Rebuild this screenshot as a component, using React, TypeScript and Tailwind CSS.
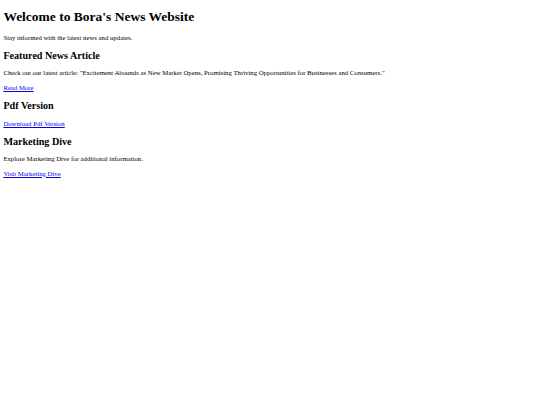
export default function App() {
  return (
    <div className="bg-white text-black m-[3.375px] font-['Liberation_Serif',serif]">
      <h1 className="text-[13.5px] leading-[15.61px] font-bold my-[9.045px]">Welcome to Bora's News Website</h1>
      <p className="text-[6.75px] leading-[7.594px] my-[6.75px]">Stay informed with the latest news and updates.</p>
      <h2 className="text-[10.125px] leading-[11.39px] font-bold my-[8.404px]">Featured News Article</h2>
      <p className="text-[6.75px] leading-[7.594px] my-[6.75px]">
        Check out our latest article: "Excitement Abounds as New Market Opens, Promising Thriving Opportunities for Businesses and Consumers."
      </p>
      <p className="text-[6.75px] leading-[7.594px] my-[6.75px]">
        <a href="#" className="text-[#0000ee] underline">Read More</a>
      </p>
      <h2 className="text-[10.125px] leading-[11.39px] font-bold my-[8.404px]">Pdf Version</h2>
      <p className="text-[6.75px] leading-[7.594px] my-[6.75px]">
        <a href="#" className="text-[#0000ee] underline">Download Pdf Version</a>
      </p>
      <h2 className="text-[10.125px] leading-[11.39px] font-bold my-[8.404px]">Marketing Dive</h2>
      <p className="text-[6.75px] leading-[7.594px] my-[6.75px]">Explore Marketing Dive for additional information.</p>
      <p className="text-[6.75px] leading-[7.594px] my-[6.75px]">
        <a href="#" className="text-[#0000ee] underline">Visit Marketing Dive</a>
      </p>
    </div>
  );
}
